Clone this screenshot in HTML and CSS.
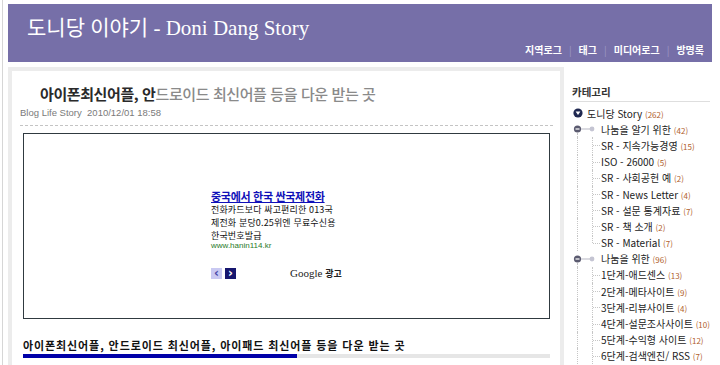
FILE: index.html
```html
<html lang="ko">
<head>
  <meta charset="UTF-8">
  <title>도니당 이야기 - Doni Dang Story</title>
  <link rel="stylesheet" href="styles.css">
</head>
<body>
  <div class="page">
    <!-- header -->
    <header class="top">
      <h1 class="site-title">도니당 이야기 - Doni Dang Story</h1>
      <nav class="menu">
        <a href="#">지역로그</a><span class="sep">|</span>
        <a href="#">태그</a><span class="sep">|</span>
        <a href="#">미디어로그</a><span class="sep">|</span>
        <a href="#">방명록</a>
      </nav>
    </header>

    <div class="body-row">
      <!-- post -->
      <main class="post-frame">
        <div class="post">
          <h2 class="post-title">아이폰최신어플, 안<span class="fade">드로이드 최신어플 등을 다운 받는 곳</span></h2>
          <div class="post-meta">Blog Life Story&nbsp;&nbsp;2010/12/01 18:58</div>

          <div class="ad-box">
            <div class="ad">
              <a class="ad-link" href="#">중국에서 한국 싼국제전화</a>
              <div class="ad-text">
                <div>전화카드보다 싸고편리한 013국</div>
                <div>제전화 분당0.25위엔 무료수신용</div>
                <div>한국번호발급</div>
              </div>
              <div class="ad-url">www.hanin114.kr</div>
              <div class="ad-foot">
                <span class="ad-arrow prev">&lsaquo;</span>
                <span class="ad-arrow next">&rsaquo;</span>
                <span class="ad-google">Google <b>광고</b></span>
              </div>
            </div>
          </div>

          <h3 class="post-sub">아이폰최신어플, 안드로이드 최신어플, 아이패드 최신어플 등을 다운 받는 곳</h3>
          <div class="progress"><div class="progress-fill" style="width:52%"></div></div>
        </div>
      </main>

      <!-- sidebar -->
      <aside class="side">
        <h4 class="side-title">카테고리</h4>
        <ul class="tree">
          <li class="row root">
            <span class="col">
              <svg width="10" height="10" viewBox="0 0 10 10"><circle cx="5" cy="5" r="4.6" fill="#1f2850"/><path d="M2.6 3.6 H7.4 L5 7 Z" fill="#fff"/></svg>
            </span>
            <span class="label">도니당 Story <em>(262)</em></span>
          </li>

          <li class="row group">
            <span class="col line">
              <svg width="15" height="16" viewBox="0 0 15 16"><circle cx="7.5" cy="8" r="3.6" fill="#5b5b70"/><rect x="5.5" y="7.4" width="4" height="1.2" fill="#fff"/><rect x="11" y="7.5" width="4" height="1" fill="#b8b8c4"/></svg>
            </span>
            <span class="col">
              <svg width="15" height="16" viewBox="0 0 15 16"><rect x="0" y="7.5" width="5" height="1" fill="#b8b8c4"/><circle cx="7" cy="8" r="2.4" fill="#c4c4d2"/></svg>
            </span>
            <span class="label">나눔을 알기 위한 <em>(42)</em></span>
          </li>
          <li class="row"><span class="col line"></span><span class="col branch"></span><span class="label">SR - 지속가능경영 <em>(15)</em></span></li>
          <li class="row"><span class="col line"></span><span class="col branch"></span><span class="label">ISO - 26000 <em>(5)</em></span></li>
          <li class="row"><span class="col line"></span><span class="col branch"></span><span class="label">SR - 사회공헌 예 <em>(2)</em></span></li>
          <li class="row"><span class="col line"></span><span class="col branch"></span><span class="label">SR - News Letter <em>(4)</em></span></li>
          <li class="row"><span class="col line"></span><span class="col branch"></span><span class="label">SR - 설문 통계자료 <em>(7)</em></span></li>
          <li class="row"><span class="col line"></span><span class="col branch"></span><span class="label">SR - 책 소개 <em>(2)</em></span></li>
          <li class="row"><span class="col line"></span><span class="col branch last"></span><span class="label">SR - Material <em>(7)</em></span></li>

          <li class="row group">
            <span class="col line">
              <svg width="15" height="16" viewBox="0 0 15 16"><circle cx="7.5" cy="8" r="3.6" fill="#5b5b70"/><rect x="5.5" y="7.4" width="4" height="1.2" fill="#fff"/><rect x="11" y="7.5" width="4" height="1" fill="#b8b8c4"/></svg>
            </span>
            <span class="col">
              <svg width="15" height="16" viewBox="0 0 15 16"><rect x="0" y="7.5" width="5" height="1" fill="#b8b8c4"/><circle cx="7" cy="8" r="2.4" fill="#c4c4d2"/></svg>
            </span>
            <span class="label">나눔을 위한 <em>(96)</em></span>
          </li>
          <li class="row"><span class="col line"></span><span class="col branch"></span><span class="label">1단계-애드센스 <em>(13)</em></span></li>
          <li class="row"><span class="col line"></span><span class="col branch"></span><span class="label">2단계-메타사이트 <em>(9)</em></span></li>
          <li class="row"><span class="col line"></span><span class="col branch"></span><span class="label">3단계-리뷰사이트 <em>(4)</em></span></li>
          <li class="row"><span class="col line"></span><span class="col branch"></span><span class="label">4단계-설문조사사이트 <em>(10)</em></span></li>
          <li class="row"><span class="col line"></span><span class="col branch"></span><span class="label">5단계-수익형 사이트 <em>(12)</em></span></li>
          <li class="row"><span class="col line"></span><span class="col branch"></span><span class="label">6단계-검색엔진/ RSS <em>(7)</em></span></li>
        </ul>
      </aside>
    </div>
  </div>
</body>
</html>
```
FILE: styles.css
```css
/* General */
html, body {
  margin: 0;
  padding: 0;
  overflow: hidden;
  background: #fff;
}

body {
  font-family: "Noto Sans CJK KR", "Liberation Sans", sans-serif;
  color: #222;
}

a {
  text-decoration: none;
  color: inherit;
}

.page {
  margin-left: 2px;
  border-left: 1px solid #d6d6d6;
  padding: 4px 8px 0 5px;
  height: 365px;
  box-sizing: border-box;
}

/* Header */
.top {
  height: 58px;
  background: #766fa8;
  padding: 0 8px 0 19px;
  display: flex;
  flex-direction: column;
  justify-content: space-between;
  box-sizing: border-box;
}

.site-title {
  margin: 12px 0 0;
  font-family: "Liberation Serif", "Noto Sans CJK KR", serif;
  font-weight: normal;
  font-size: 21px;
  line-height: 24px;
  color: #fff;
}

.menu {
  align-self: flex-end;
  display: flex;
  align-items: center;
  gap: 7px;
  padding-bottom: 5px;
  font-size: 10px;
  font-weight: bold;
  line-height: 14px;
  color: #fff;
}

.menu .sep {
  color: #9d97c4;
  font-weight: normal;
}

/* Layout */
.body-row {
  display: flex;
  margin-top: 5px;
}

.post-frame {
  width: 556px;
  flex: none;
  border: 4px solid #ececec;
  border-bottom: none;
  box-sizing: border-box;
  height: 300px;
}

.post {
  padding: 12px 7px 0 8px;
}

.post-title {
  margin: 0 0 2px;
  padding-left: 20px;
  font-size: 15px;
  line-height: 22px;
  letter-spacing: -0.4px;
  color: #2a2a2a;
}

.post-title .fade {
  color: #8a8a8a;
  font-weight: 500;
}

.post-meta {
  font-family: "Liberation Sans", "Noto Sans CJK KR", sans-serif;
  font-size: 9.5px;
  line-height: 12px;
  color: #7a7a7a;
  padding-bottom: 6px;
  border-bottom: 1px dashed #c4c4c4;
}

/* Ad */
.ad-box {
  margin: 7px 3px 0;
  height: 186px;
  border: 1px solid #303a40;
  box-sizing: border-box;
  padding: 55px 0 0 187px;
}

.ad {
  width: 170px;
}

.ad-link {
  display: block;
  font-size: 11px;
  font-weight: bold;
  line-height: 14px;
  color: #1010b8;
  text-decoration: underline;
  letter-spacing: -0.3px;
}

.ad-text {
  font-size: 9px;
  line-height: 13px;
  color: #111;
  letter-spacing: 0.15px;
}

.ad-text div {
  height: 13px;
}

.ad-url {
  margin-top: -2px;
  font-family: "Liberation Sans", sans-serif;
  font-size: 8px;
  line-height: 12px;
  color: #2a7a2a;
}

.ad-foot {
  display: flex;
  align-items: center;
  margin-top: 15px;
  height: 12px;
}

.ad-arrow {
  width: 11px;
  height: 11px;
  display: flex;
  align-items: center;
  justify-content: center;
  font-family: "DejaVu Sans", sans-serif;
  font-size: 12px;
  font-weight: bold;
  line-height: 11px;
  margin-right: 3px;
}

.ad-arrow.prev {
  background: #c9c9f2;
  color: #4848a8;
}

.ad-arrow.next {
  background: #16166e;
  color: #fff;
}

.ad-google {
  margin-left: 51px;
  font-family: "Liberation Serif", serif;
  font-size: 11px;
  color: #222;
}

.ad-google b {
  font-family: "Noto Sans CJK KR", sans-serif;
  font-size: 9px;
}

/* Bottom heading */
.post-sub {
  margin: 19px 3px 2px;
  font-size: 11px;
  line-height: 14px;
  font-weight: bold;
  color: #111;
  letter-spacing: 0.9px;
}

.progress {
  margin: 0 3px;
  height: 4px;
  background: #e6e6e6;
}

.progress-fill {
  height: 100%;
  background: #0000a8;
}

/* Sidebar */
.side {
  flex: 1;
  padding: 18px 6px 0 6px;
}

.side-title {
  margin: 0;
  font-size: 10.5px;
  line-height: 13px;
  font-weight: bold;
  color: #333;
  padding: 0 0 3px 2px;
  border-bottom: 1px solid #dedede;
}

.tree {
  list-style: none;
  margin: 3px 0 0;
  padding: 0;
}

.row {
  display: flex;
  align-items: center;
  height: 16.2px;
  font-size: 10px;
  color: #222;
  white-space: nowrap;
}

.row em {
  font-style: normal;
  font-size: 8px;
  color: #b0602c;
}

.col {
  position: relative;
  width: 15px;
  height: 16px;
  flex: none;
  display: flex;
  align-items: center;
  justify-content: center;
}

.col svg {
  position: relative;
}

.col.line::before {
  content: "";
  position: absolute;
  left: 7px;
  top: 0;
  bottom: 0;
  border-left: 1px dotted #c6c6c6;
}

.row.group .col.line::before {
  top: 12px;
}

.col.branch::before {
  content: "";
  position: absolute;
  left: 7px;
  top: 0;
  bottom: 0;
  border-left: 1px dotted #c6c6c6;
}

.col.branch.last::before {
  bottom: 8px;
}

.col.branch::after {
  content: "";
  position: absolute;
  left: 8px;
  right: 0;
  top: 8px;
  border-top: 1px dotted #c6c6c6;
}

.row.root .label {
  margin-left: 2px;
}

.label {
  margin-left: 1px;
}
```
